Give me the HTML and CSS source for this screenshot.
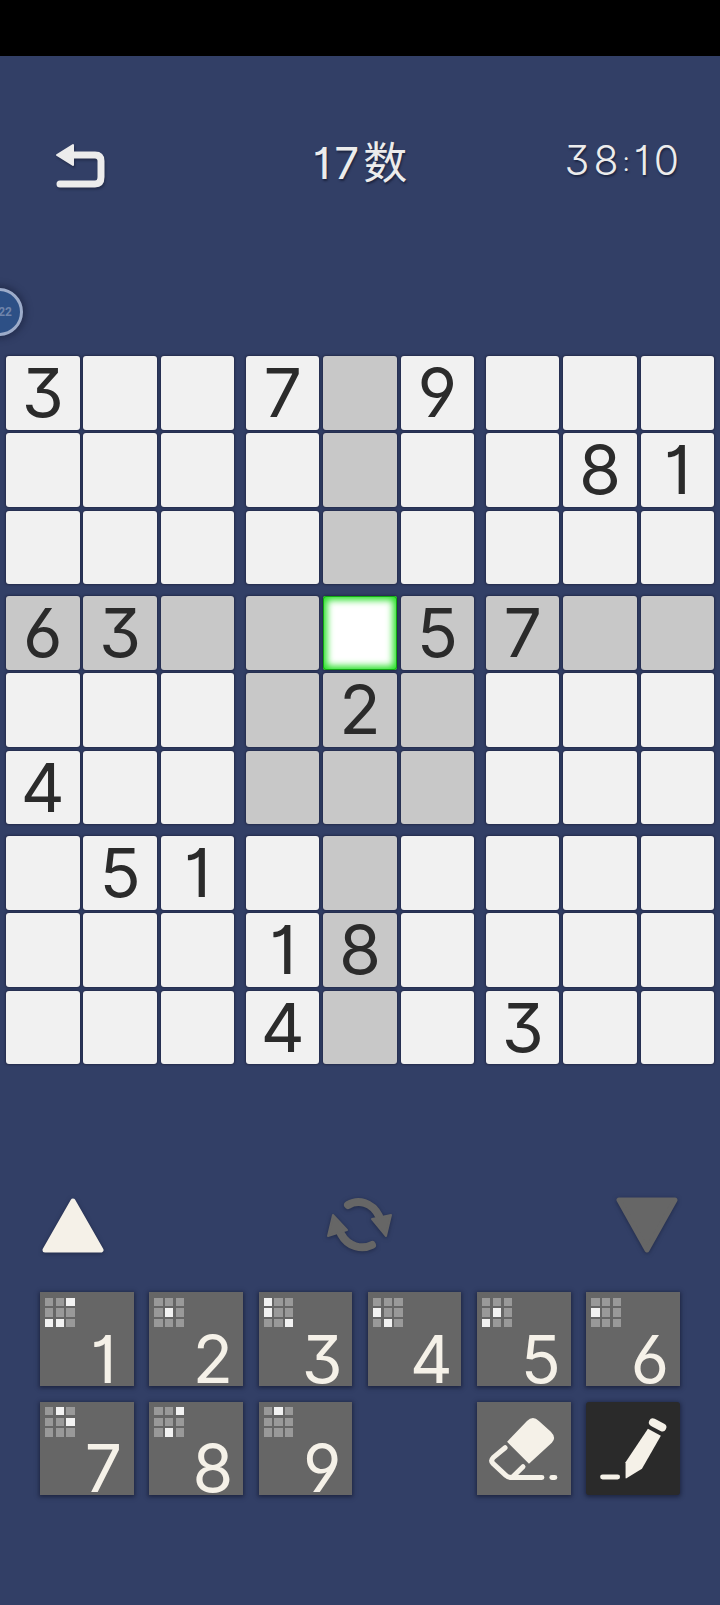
FILE: index.html
```html
<!DOCTYPE html>
<html lang="zh">
<head>
<meta charset="utf-8">
<title>17数</title>
<link rel="stylesheet" href="styles.css">
</head>
<body>
<div class="status"></div>
<div class="avatar"><span class="avatar-text">22</span></div>
<header class="topbar">
  <svg class="back" width="50" height="48" viewBox="0 0 50 48"><path class="back-arrow" d="M2 15 L18 5 V25 Z"/><path class="back-line" d="M16 15 H40 Q46 15 46 21 V37 Q46 44 40 44 H5"/></svg>
  <div class="title">17数</div>
  <div class="timer">38<span class="colon">:</span>10</div>
</header>
<main class="board">
  <div class="block">
    <div class="cell">3</div><div class="cell"></div><div class="cell"></div>
    <div class="cell"></div><div class="cell"></div><div class="cell"></div>
    <div class="cell"></div><div class="cell"></div><div class="cell"></div>
  </div>
  <div class="block">
    <div class="cell">7</div><div class="cell hl"></div><div class="cell">9</div>
    <div class="cell"></div><div class="cell hl"></div><div class="cell"></div>
    <div class="cell"></div><div class="cell hl"></div><div class="cell"></div>
  </div>
  <div class="block">
    <div class="cell"></div><div class="cell"></div><div class="cell"></div>
    <div class="cell"></div><div class="cell">8</div><div class="cell">1</div>
    <div class="cell"></div><div class="cell"></div><div class="cell"></div>
  </div>
  <div class="block">
    <div class="cell hl">6</div><div class="cell hl">3</div><div class="cell hl"></div>
    <div class="cell"></div><div class="cell"></div><div class="cell"></div>
    <div class="cell">4</div><div class="cell"></div><div class="cell"></div>
  </div>
  <div class="block">
    <div class="cell hl"></div><div class="cell sel"></div><div class="cell hl">5</div>
    <div class="cell hl"></div><div class="cell hl">2</div><div class="cell hl"></div>
    <div class="cell hl"></div><div class="cell hl"></div><div class="cell hl"></div>
  </div>
  <div class="block">
    <div class="cell hl">7</div><div class="cell hl"></div><div class="cell hl"></div>
    <div class="cell"></div><div class="cell"></div><div class="cell"></div>
    <div class="cell"></div><div class="cell"></div><div class="cell"></div>
  </div>
  <div class="block">
    <div class="cell"></div><div class="cell">5</div><div class="cell">1</div>
    <div class="cell"></div><div class="cell"></div><div class="cell"></div>
    <div class="cell"></div><div class="cell"></div><div class="cell"></div>
  </div>
  <div class="block">
    <div class="cell"></div><div class="cell hl"></div><div class="cell"></div>
    <div class="cell">1</div><div class="cell hl">8</div><div class="cell"></div>
    <div class="cell">4</div><div class="cell hl"></div><div class="cell"></div>
  </div>
  <div class="block">
    <div class="cell"></div><div class="cell"></div><div class="cell"></div>
    <div class="cell"></div><div class="cell"></div><div class="cell"></div>
    <div class="cell">3</div><div class="cell"></div><div class="cell"></div>
  </div>
</main>
<section class="controls">
  <svg class="tri" width="62" height="57" viewBox="0 0 62 57"><path class="tri-up" d="M31 4 L59 53 H3 Z"/></svg>
  <svg class="tri" width="68" height="58" viewBox="0 0 68 58"><path class="ref-line" d="M22 9 C32 3 46 6 53 20"/><path class="ref-line" d="M46 49 C36 54 22 51 15 38"/><path class="ref-head" d="M46 23 L65 19 L60 40 Z"/><path class="ref-head" d="M2 40 L7 19 L21 34 Z"/></svg>
  <svg class="tri" width="62" height="57" viewBox="0 0 62 57"><path class="tri-down" d="M3 3 H59 L31 53 Z"/></svg>
</section>
<section class="pad">
  <button class="tile"><span class="mini"><i></i><i></i><i class="on"></i><i></i><i></i><i></i><i class="on"></i><i class="on"></i><i></i></span><span class="num">1</span></button>
  <button class="tile"><span class="mini"><i></i><i></i><i></i><i></i><i class="on"></i><i></i><i></i><i></i><i></i></span><span class="num">2</span></button>
  <button class="tile"><span class="mini"><i class="on"></i><i></i><i></i><i class="on"></i><i></i><i></i><i></i><i></i><i class="on"></i></span><span class="num">3</span></button>
  <button class="tile"><span class="mini"><i></i><i></i><i></i><i class="on"></i><i></i><i></i><i></i><i class="on"></i><i></i></span><span class="num">4</span></button>
  <button class="tile"><span class="mini"><i></i><i></i><i></i><i></i><i class="on"></i><i></i><i class="on"></i><i></i><i></i></span><span class="num">5</span></button>
  <button class="tile"><span class="mini"><i></i><i></i><i></i><i class="on"></i><i></i><i></i><i></i><i></i><i></i></span><span class="num">6</span></button>
  <button class="tile"><span class="mini"><i></i><i class="on"></i><i></i><i></i><i></i><i class="on"></i><i></i><i></i><i></i></span><span class="num">7</span></button>
  <button class="tile"><span class="mini"><i></i><i></i><i class="on"></i><i></i><i></i><i></i><i></i><i class="on"></i><i></i></span><span class="num">8</span></button>
  <button class="tile"><span class="mini"><i></i><i class="on"></i><i></i><i></i><i></i><i></i><i></i><i></i><i></i></span><span class="num">9</span></button>
  <div class="spacer"></div>
  <button class="tile tool">
    <svg width="94" height="94" viewBox="0 0 94 94"><path class="ink" d="M30 40 L50 19 Q56 13 62 19 L74 30 Q80 36 75 41 L52 62 Z"/><path class="ink-line" d="M28 46 L16 56 Q13 59 16 62 L29 74 Q31 76 35 76 H65"/><path class="ink-line" d="M46 65 L36 75"/><path class="ink-line" d="M75 76 H78"/></svg>
  </button>
  <button class="tile tool dark">
    <svg width="94" height="94" viewBox="0 0 94 94"><path class="ink" d="M62 27 L75 34 L56 67 L40 77 Q39.5 77 39.5 76 V60.5 Z"/><path class="ink-line2" d="M67 20.5 L76.5 25.5"/><path class="ink-line" d="M16.5 75.5 H31.5"/></svg>
  </button>
</section>
</body>
</html>
```
FILE: styles.css
```css
html, body { margin: 0; padding: 0; }
body {
  width: 720px;
  height: 1605px;
  overflow: hidden;
  position: relative;
  background: #323f66;
  font-family: Inter, "Noto Sans CJK SC", sans-serif;
  font-feature-settings: "cv09", "cv01", "cv03", "cv04";
}
.status { height: 56px; background: #000; }
.topbar {
  margin-top: 80px;
  height: 48px;
  display: grid;
  grid-template-columns: 1fr auto 1fr;
  align-items: center;
  color: #ececec;
  text-shadow: 1px 2px 2px rgba(20, 26, 50, 0.7);
  font-weight: 400;
}
.back { margin-left: 55px; margin-top: 1px; filter: drop-shadow(1px 2px 1px rgba(20, 26, 50, 0.5)); }
.back-arrow { fill: #ececec; stroke: #ececec; stroke-width: 2; stroke-linejoin: round; }
.back-line { fill: none; stroke: #ececec; stroke-width: 7; stroke-linecap: round; }
.title { font-size: 44px; line-height: 48px; padding-left: 4px; letter-spacing: 4px; font-feature-settings: "cv01"; }
.timer { font-size: 41px; font-weight: 300; line-height: 48px; justify-self: end; padding-right: 37px; letter-spacing: 4px; }
.colon { font-size: 26px; position: relative; top: -4px; }
.avatar {
  position: absolute;
  left: -25px;
  top: 288px;
  width: 42px;
  height: 42px;
  border: 3px solid #9dacca;
  border-radius: 50%;
  background: #2d5086;
  box-shadow: 0 0 6px 3px rgba(25, 32, 60, 0.55);
  display: flex;
  align-items: center;
  justify-content: flex-end;
}
.avatar-text { font-size: 12px; font-weight: 700; color: #6f84ab; padding-right: 8px; font-family: Roboto, sans-serif; }
.board {
  margin-top: 172px;
  margin-left: 6px;
  display: grid;
  grid-template-columns: repeat(3, 228.1px);
  grid-auto-rows: 228.1px;
  gap: 12px 11.9px;
}
.block {
  display: grid;
  grid-template-columns: repeat(3, 73.5px);
  grid-auto-rows: 73.5px;
  gap: 3.8px;
}
.cell {
  background: #f1f1f1;
  border-radius: 3px;
  box-shadow: 0 0 2px 1px #242c4b;
  color: #2b2b2b;
  font-size: 68px;
  font-weight: 400;
  line-height: 72px;
  text-align: center;
}
.cell.hl { background: #c8c8c8; }
.cell.sel { background: #fff; box-shadow: 0 0 2px 1px #242c4b, inset 0 0 0 1px #12a812, inset 0 0 7px 4px #28e028; }
.controls {
  margin-top: 132px;
  padding: 0 42px;
  height: 58px;
  display: flex;
  justify-content: space-between;
  align-items: center;
}
.tri { display: block; filter: drop-shadow(0 1px 2px rgba(20, 26, 50, 0.6)); }
.tri-up { fill: #f5f1e8; stroke: #f5f1e8; stroke-width: 5; stroke-linejoin: round; }
.tri-down { fill: #666; stroke: #666; stroke-width: 5; stroke-linejoin: round; }
.ref-line { fill: none; stroke: #666; stroke-width: 8; stroke-linecap: round; }
.ref-head { fill: #666; stroke: #666; stroke-width: 2; stroke-linejoin: round; }
.pad {
  margin-top: 38px;
  margin-left: 40px;
  display: grid;
  grid-template-columns: repeat(6, 93.5px);
  grid-auto-rows: 93.5px;
  gap: 15.8px;
}
.tile {
  padding: 5.5px 0 0 5px;
  border: 0;
  margin: 0;
  background: #666;
  box-shadow: 0 1px 4px 1px rgba(20, 26, 50, 0.7);
  display: flex;
  flex-direction: column;
  font-family: inherit;
  font-feature-settings: inherit;
}
.mini {
  display: grid;
  grid-template-columns: repeat(3, 8.3px);
  grid-auto-rows: 8.3px;
  gap: 2.4px;
}
.mini i { background: #999; display: block; }
.mini i.on { background: #f2f2f2; }
.num {
  align-self: flex-end;
  width: 44px;
  margin-top: 6.5px;
  margin-right: 8px;
  text-align: center;
  font-size: 66px;
  font-weight: 400;
  line-height: 50px;
  color: #f5f1e8;
}
.tool { padding: 0; }
.tool.dark { background: #2a2a2a; border-radius: 3px; }
.ink { fill: #f5f1e8; }
.ink-line { fill: none; stroke: #f5f1e8; stroke-width: 5; stroke-linecap: round; stroke-linejoin: round; }
.ink-line2 { fill: none; stroke: #f5f1e8; stroke-width: 8; stroke-linecap: round; }
```
